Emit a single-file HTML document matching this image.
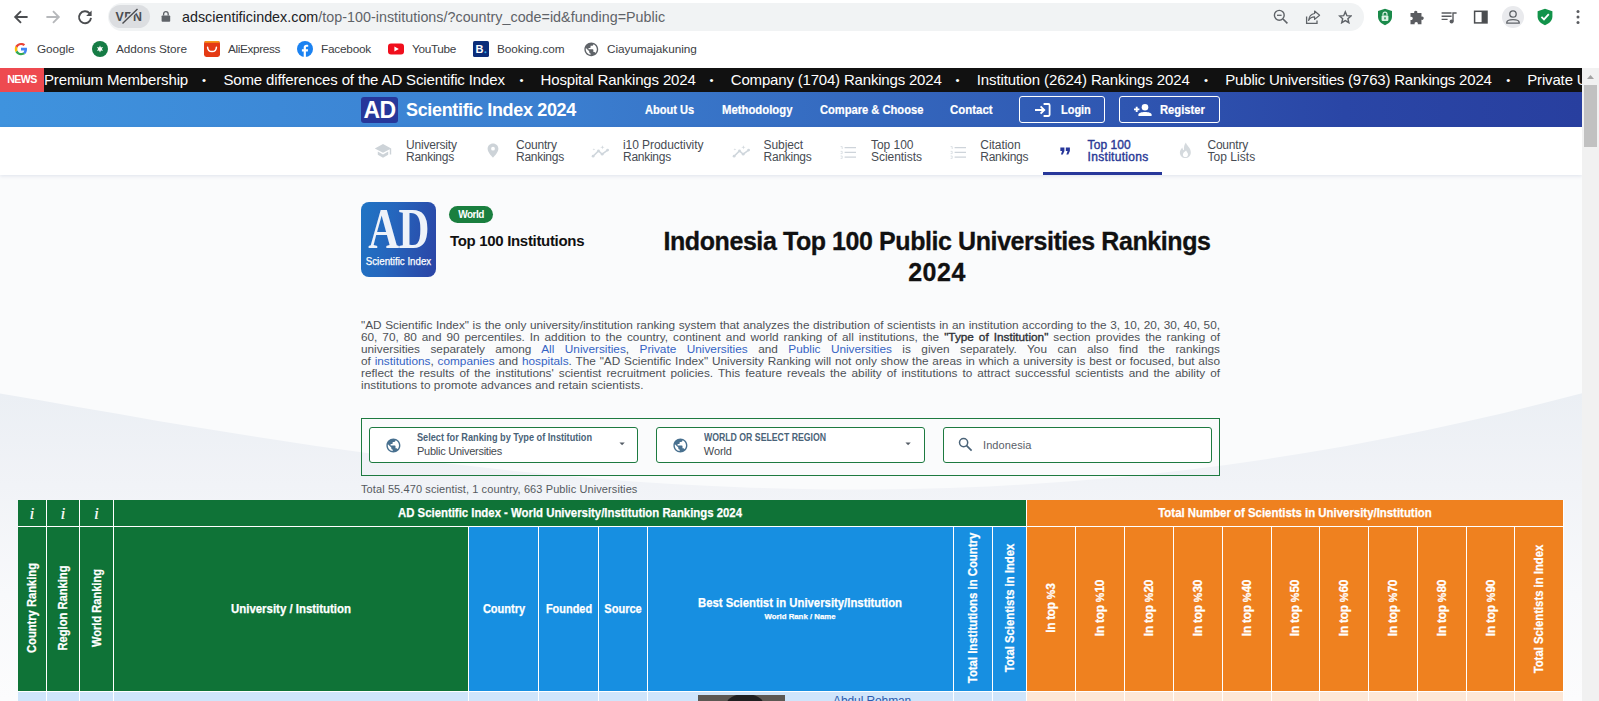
<!DOCTYPE html>
<html lang="en">
<head>
<meta charset="utf-8">
<title>Indonesia Top 100 Public Universities Rankings 2024</title>
<style>
*{box-sizing:border-box;margin:0;padding:0}
html,body{width:1599px;height:701px;overflow:hidden;background:#fff}
body{font-family:"Liberation Sans",sans-serif;color:#222;position:relative}
.abs{position:absolute}
#root{position:absolute;left:0;top:0;width:1599px;height:701px;overflow:hidden;background:#fff}
/* ---------- browser chrome ---------- */
#chrome{position:absolute;left:0;top:0;width:1599px;height:68px;background:#fff}
#omni{position:absolute;left:108px;top:3px;width:1256px;height:28px;border-radius:14px;background:#f1f3f4}
#vpn{position:absolute;left:109px;top:5px;width:41px;height:23px;border-radius:12px;background:#dcdee1}
#url{position:absolute;left:182px;top:8px;font-size:14.3px;line-height:18px;color:#202124;white-space:nowrap;letter-spacing:0.02px}
#url span{color:#5f6368}
.bm{position:absolute;top:41px;font-size:11.8px;line-height:16px;color:#3c4043;white-space:nowrap}
.fav{position:absolute;top:40px;width:16px;height:16px}
/* ---------- page ---------- */
#page{position:absolute;left:0;top:68px;width:1582px;height:633px;background:#fafbfc;overflow:hidden}
#ticker{position:absolute;left:0;top:0;width:1582px;height:24px;background:#111;color:#fff;white-space:nowrap;overflow:hidden}
#news{position:absolute;left:0;top:0;width:44px;height:24px;background:#ee4a50;color:#fff;font-weight:bold;font-size:10.6px;line-height:22px;text-align:center;letter-spacing:-0.55px}
.tk{position:absolute;top:3px;font-size:15px;line-height:18px;color:#fff;white-space:nowrap;letter-spacing:-0.45px}
#hdr{position:absolute;left:0;top:24px;width:1582px;height:35px;background:linear-gradient(90deg,#3f93de 0%,#3b7fd0 35%,#3260b8 62%,#2a46a6 85%,#283f9f 100%)}
#nav{position:absolute;left:0;top:59px;width:1582px;height:48px;background:#fff;box-shadow:0 1px 4px rgba(40,60,120,.13)}
.hl{position:absolute;top:11px;-webkit-text-stroke:0.2px #fff;font-size:12px;font-weight:bold;color:#fff;line-height:14px;white-space:nowrap}
.ni{position:absolute;top:12.5px;font-size:12px;line-height:12px;color:#474c53;white-space:nowrap}
.nic{position:absolute}
#nav > *{margin-top:-1px}
#nav > svg.nic{margin-top:0}

/* hero */
#logo{position:absolute;left:361px;top:134px;width:75px;height:75px;border-radius:8px;background:linear-gradient(100deg,#1f74c4 0%,#2566bd 40%,#2b44a5 100%);overflow:hidden}
#badge{position:absolute;left:449px;top:138px;width:44px;height:17px;border-radius:9px;background:#1a7f3f;color:#fff;font-weight:bold;font-size:10px;line-height:17px;text-align:center;letter-spacing:-0.55px}
#sub{position:absolute;left:450px;top:163px;font-size:15px;line-height:20px;font-weight:bold;color:#111;white-space:nowrap;letter-spacing:-0.32px}
#h1{position:absolute;left:637px;top:158px;-webkit-text-stroke:0.3px #111;width:600px;text-align:center;font-size:25px;line-height:31px;font-weight:bold;color:#111;white-space:nowrap;letter-spacing:-0.42px}
.dl{position:absolute;left:361px;width:859px;font-size:11.8px;line-height:12px;color:#4d5156;text-align:justify;text-align-last:justify;white-space:nowrap;height:12px}
.dl a{color:#3563c4;text-decoration:none}
.dl b{font-weight:normal;color:#2e3136;-webkit-text-stroke:0.35px #2e3136}
/* filter */
#fbox{position:absolute;left:361px;top:350px;width:859px;height:58px;border:1px solid #1d7a40}
.sel{position:absolute;top:359px;height:36px;border:1px solid #1d7a40;border-radius:3px;background:#fff}
.slab{position:absolute;top:362.5px;font-size:9.8px;line-height:12px;font-weight:bold;color:#4a6378;white-space:nowrap}
.sval{position:absolute;top:376.5px;font-size:11px;line-height:13px;color:#454a50;white-space:nowrap}
/* table */
.c{position:absolute;color:#fff;font-weight:bold;font-size:12px;white-space:nowrap}
.g{background:#0f7337}.bl{background:#178fe1}.o{background:#ef811f}
.vt{position:absolute;-webkit-text-stroke:0.25px #fff;color:#fff;font-weight:bold;font-size:12px;line-height:14px;white-space:nowrap;transform:translate(-50%,-50%) rotate(-90deg);transform-origin:center}
.ht{position:absolute;-webkit-text-stroke:0.25px #fff;color:#fff;font-weight:bold;font-size:12px;line-height:14px;white-space:nowrap;transform:translate(-50%,-50%)}
</style>
</head>
<body>
<div id="root">

<!-- ================= BROWSER CHROME ================= -->
<div id="chrome">
  <div id="omni"></div>
  <div id="vpn"></div>
  <div id="url">adscientificindex.com<span>/top-100-institutions/?country_code=id&amp;funding=Public</span></div>

  <!-- nav buttons -->
  <svg class="abs" style="left:13px;top:9px" width="16" height="16" viewBox="0 0 16 16"><path d="M14.6 8 H2.6 M8 2.2 L2.2 8 L8 13.8" fill="none" stroke="#4b4d50" stroke-width="1.9" stroke-linejoin="miter"/></svg>
  <svg class="abs" style="left:45px;top:9px" width="16" height="16" viewBox="0 0 16 16"><path d="M1.4 8 H13.4 M8 2.2 L13.8 8 L8 13.8" fill="none" stroke="#b6b8bb" stroke-width="1.9" stroke-linejoin="miter"/></svg>
  <svg class="abs" style="left:77px;top:9px" width="16" height="16" viewBox="0 0 16 16"><path d="M12.6 4.4 A6 6 0 1 0 14 8.9" fill="none" stroke="#4b4d50" stroke-width="1.9"/><path d="M14.6 1.6 V7 H9.2 Z" fill="#4b4d50"/></svg>
  <!-- vpn chip text -->
  <div class="abs" style="left:114px;top:10px;width:30px;font-size:12.4px;line-height:15px;font-weight:bold;color:#4b4d50;letter-spacing:0.5px;text-align:center">VPN</div>
  <svg class="abs" style="left:109px;top:5px" width="41" height="23" viewBox="0 0 41 23"><path d="M13.5 18.5 L28.5 4" stroke="#dcdee1" stroke-width="4"/><path d="M13.5 18.5 L28.5 4" stroke="#4b4d50" stroke-width="1.4"/></svg>
  <!-- lock -->
  <svg class="abs" style="left:160px;top:10px" width="12" height="13" viewBox="0 0 12 13"><rect x="1.6" y="5.4" width="8.6" height="6.4" rx="0.8" fill="#5f6368"/><path d="M3.6 5.6 V3.9 A2.3 2.3 0 0 1 8.2 3.9 V5.6" fill="none" stroke="#5f6368" stroke-width="1.3"/></svg>
  <!-- zoom out -->
  <svg class="abs" style="left:1272px;top:8px" width="18" height="18" viewBox="0 0 18 18"><circle cx="7.3" cy="7.3" r="4.9" fill="none" stroke="#5f6368" stroke-width="1.4"/><path d="M11 11 L15.4 15.4" stroke="#5f6368" stroke-width="1.6"/><path d="M5 7.3 H9.6" stroke="#5f6368" stroke-width="1.3"/></svg>
  <!-- share -->
  <svg class="abs" style="left:1304px;top:8px" width="18" height="18" viewBox="0 0 18 18"><path d="M2.6 8.4 V15.4 H13 V12.6" fill="none" stroke="#5f6368" stroke-width="1.3"/><path d="M10.6 3 L15.6 7.2 L10.6 11.4 V8.9 C7.6 8.9 5.8 10 4.6 12.4 C5 8.6 7 6 10.6 5.5 Z" fill="none" stroke="#5f6368" stroke-width="1.2" stroke-linejoin="round"/></svg>
  <!-- star -->
  <svg class="abs" style="left:1337.6px;top:9.8px" width="14.6" height="14.6" viewBox="0 0 18 18"><path d="M9 2.3 L11 7 L16 7.4 L12.2 10.7 L13.4 15.7 L9 13 L4.6 15.7 L5.8 10.7 L2 7.4 L7 7 Z" fill="none" stroke="#5f6368" stroke-width="1.75" stroke-linejoin="miter"/></svg>
  <!-- shield lock green -->
  <svg class="abs" style="left:1376px;top:8px" width="18" height="18" viewBox="0 0 18 18"><path d="M9 0.8 L16 3 V8.6 C16 13 12.6 15.8 9 17.2 C5.4 15.8 2 13 2 8.6 V3 Z" fill="#1a8a4a"/><rect x="5.6" y="7.6" width="6.8" height="5.4" rx="1" fill="#d9f2e2"/><path d="M7 7.6 V6.2 A2 2 0 0 1 11 6.2 V7.6" fill="none" stroke="#d9f2e2" stroke-width="1.2"/><rect x="8.3" y="9.3" width="1.4" height="2" fill="#1a8a4a"/></svg>
  <!-- puzzle -->
  <svg class="abs" style="left:1406.6px;top:5.6px" width="21" height="21" viewBox="0 0 18 18"><path d="M3 6 H6.2 C5.4 3.4 9.6 3.4 8.8 6 H12.4 V9.2 C15 8.4 15 12.6 12.4 11.8 V15.6 H9.2 C10 13 5.8 13 6.6 15.6 H3 V12 C5.6 12.8 5.6 8.6 3 9.4 Z" fill="#5a5c60"/></svg>
  <!-- music list -->
  <svg class="abs" style="left:1440px;top:8px" width="18" height="18" viewBox="0 0 18 18"><path d="M1.6 5 H11.6 M1.6 8.2 H11.6 M1.6 11.4 H7.6" stroke="#5a5c60" stroke-width="1.4"/><path d="M13 13.4 V5 H16.6" fill="none" stroke="#5a5c60" stroke-width="1.4"/><circle cx="11.6" cy="13.6" r="2" fill="#5a5c60"/></svg>
  <!-- side panel -->
  <svg class="abs" style="left:1472px;top:8px" width="18" height="18" viewBox="0 0 18 18"><rect x="2.6" y="3.3" width="12.4" height="11.6" fill="none" stroke="#4b4d50" stroke-width="1.5"/><rect x="9.6" y="3.3" width="5.4" height="11.6" fill="#4b4d50"/></svg>
  <!-- profile -->
  <div class="abs" style="left:1502px;top:6px;width:22px;height:22px;border-radius:11px;background:#e9eaed"></div>
  <svg class="abs" style="left:1504px;top:8px" width="18" height="18" viewBox="0 0 18 18"><circle cx="9" cy="6" r="3.2" fill="none" stroke="#5f6368" stroke-width="1.3"/><path d="M2.8 14.6 C2.8 10.6 15.2 10.6 15.2 14.6 V15.2 H2.8 Z" fill="none" stroke="#5f6368" stroke-width="1.3"/></svg>
  <!-- green shield check -->
  <svg class="abs" style="left:1536px;top:8px" width="18" height="18" viewBox="0 0 18 18"><path d="M9 0.8 L16.4 3.2 V8.6 C16.4 13 12.8 15.8 9 17.2 C5.2 15.8 1.6 13 1.6 8.6 V3.2 Z" fill="#12934a"/><path d="M5.4 8.8 L8 11.4 L12.8 6.2" fill="none" stroke="#fff" stroke-width="1.8"/></svg>
  <!-- dots -->
  <svg class="abs" style="left:1569px;top:8px" width="18" height="18" viewBox="0 0 18 18"><circle cx="9" cy="3.4" r="1.5" fill="#5a5c60"/><circle cx="9" cy="9" r="1.5" fill="#5a5c60"/><circle cx="9" cy="14.6" r="1.5" fill="#5a5c60"/></svg>

  <!-- bookmarks -->
  <svg class="fav" style="left:13px;top:41px" viewBox="0 0 16 16"><path d="M14 8.2 C14 7.7 13.95 7.2 13.85 6.8 H8 V9.4 H11.4 C11.2 10.3 10.7 11 10 11.5 L12.1 13.1 C13.3 12 14 10.3 14 8.2 Z" fill="#4285f4"/><path d="M8 14.2 C9.7 14.2 11.1 13.7 12.1 13.1 L10 11.5 C9.5 11.85 8.8 12.1 8 12.1 C6.4 12.1 5 11 4.5 9.5 L2.4 11.1 C3.4 13 5.5 14.2 8 14.2 Z" fill="#34a853"/><path d="M4.5 9.5 C4.4 9.1 4.3 8.6 4.3 8.1 C4.3 7.6 4.4 7.1 4.5 6.7 L2.4 5.1 C2 5.9 1.8 6.9 1.8 8.1 C1.8 9.2 2 10.2 2.4 11.1 Z" fill="#fbbc05"/><path d="M8 4.1 C9 4.1 9.8 4.45 10.5 5.05 L12.2 3.35 C11.1 2.35 9.7 1.9 8 1.9 C5.5 1.9 3.4 3.2 2.4 5.1 L4.5 6.7 C5 5.2 6.4 4.1 8 4.1 Z" fill="#ea4335"/></svg>
  <div class="bm" style="left:37px;letter-spacing:-0.09px">Google</div>
  <svg class="fav" style="left:92px;top:41px" viewBox="0 0 16 16"><circle cx="8" cy="8" r="8" fill="#167c45"/><path d="M8 4.4 L8.9 6.4 L11.1 6.1 L9.8 7.9 L11.1 9.8 L8.9 9.5 L8 11.6 L7.1 9.5 L4.9 9.8 L6.2 7.9 L4.9 6.1 L7.1 6.4 Z" fill="#fff"/></svg>
  <div class="bm" style="left:116px;letter-spacing:-0.04px">Addons Store</div>
  <svg class="fav" style="left:204px;top:41px" viewBox="0 0 16 16"><rect x="0" y="0" width="16" height="16" rx="2.4" fill="#e43a14"/><rect x="0.6" y="0" width="14.8" height="1.8" rx="0.9" fill="#f7971d"/><path d="M3.6 6.2 C3.8 12 12.2 12 12.4 6.2" fill="none" stroke="#fff" stroke-width="1.5" stroke-linecap="round"/></svg>
  <div class="bm" style="left:228px;letter-spacing:-0.37px">AliExpress</div>
  <svg class="fav" style="left:297px;top:41px" viewBox="0 0 16 16"><circle cx="8" cy="8" r="8" fill="#1b82f1"/><path d="M8.9 16 V10.4 H10.8 L11.1 8.2 H8.9 V6.9 C8.9 6.2 9.2 5.8 10 5.8 H11.2 V3.9 C10.9 3.85 10.2 3.8 9.5 3.8 C7.8 3.8 6.7 4.8 6.7 6.6 V8.2 H4.9 V10.4 H6.7 V16 Z" fill="#fff"/></svg>
  <div class="bm" style="left:321px;letter-spacing:-0.23px">Facebook</div>
  <svg class="fav" style="left:388px;top:41px" viewBox="0 0 16 16"><rect x="0" y="2.4" width="16" height="11.2" rx="3" fill="#f00e1c"/><path d="M6.4 5.4 L10.8 8 L6.4 10.6 Z" fill="#fff"/></svg>
  <div class="bm" style="left:412px;letter-spacing:-0.34px">YouTube</div>
  <svg class="fav" style="left:473px;top:41px" viewBox="0 0 16 16"><rect x="0" y="0" width="16" height="16" rx="1.6" fill="#0b2d7a"/><text x="2.6" y="12" font-family="Liberation Sans, sans-serif" font-weight="bold" font-size="11" fill="#fff">B</text><circle cx="12.4" cy="11.2" r="1.05" fill="#32a7e8"/></svg>
  <div class="bm" style="left:497px;letter-spacing:-0.05px">Booking.com</div>
  <svg class="fav" style="left:582.6px;top:40.8px;width:16.6px;height:16.6px" viewBox="0 0 24 24"><path d="M12 2C6.48 2 2 6.48 2 12s4.48 10 10 10 10-4.48 10-10S17.52 2 12 2zm-1 17.93c-3.95-.49-7-3.85-7-7.93 0-.62.08-1.21.21-1.79L9 15v1c0 1.1.9 2 2 2v1.93zm6.9-2.54c-.26-.81-1-1.39-1.9-1.39h-1v-3c0-.55-.45-1-1-1H8v-2h2c.55 0 1-.45 1-1V7h2c1.1 0 2-.9 2-2v-.41c2.93 1.19 5 4.06 5 7.41 0 2.08-.8 3.97-2.1 5.39z" fill="#5f6368"/></svg>
  <div class="bm" style="left:607px;letter-spacing:-0.05px">Ciayumajakuning</div>
</div>

<!-- ================= PAGE ================= -->
<div id="page">
  <svg class="abs" style="left:0;top:0" width="1582" height="633" viewBox="0 0 1582 633"><defs><linearGradient id="wv" x1="0" y1="0" x2="0" y2="1"><stop offset="0" stop-color="#ebeff4"/><stop offset="0.3" stop-color="#f1f3f7"/><stop offset="0.65" stop-color="#f8f9fb"/><stop offset="1" stop-color="#fcfcfd"/></linearGradient></defs><path d="M0 325.4 L40 332.3 L79 339.3 L119 346.1 L158 352.9 L198 359.4 L237 365.8 L277 372.0 L316 377.9 L356 383.6 L396 388.9 L435 394.0 L475 398.6 L514 402.9 L554 406.8 L593 410.3 L633 413.4 L672 416.0 L712 418.1 L751 419.7 L791 420.8 L831 421.4 L870 421.5 L910 421.0 L949 420.0 L989 418.4 L1028 416.3 L1068 413.6 L1107 410.3 L1147 406.4 L1186 401.9 L1226 396.9 L1266 391.2 L1305 385.0 L1345 378.2 L1384 370.8 L1424 362.8 L1463 354.3 L1503 345.2 L1542 335.5 L1582 325.3 V633 H0 Z" fill="url(#wv)"/></svg>
  <div id="ticker">
    <div class="tk" style="left:44px;letter-spacing:-0.15px">Premium Membership</div>
    <div class="tk" style="left:199.0px;width:10px;text-align:center;font-size:11.5px;letter-spacing:0">•</div>
    <div class="tk" style="left:223.4px;letter-spacing:-0.14px">Some differences of the AD Scientific Index</div>
    <div class="tk" style="left:516.4px;width:10px;text-align:center;font-size:11.5px;letter-spacing:0">•</div>
    <div class="tk" style="left:540.5px;letter-spacing:-0.147px">Hospital Rankings 2024</div>
    <div class="tk" style="left:706.6px;width:10px;text-align:center;font-size:11.5px;letter-spacing:0">•</div>
    <div class="tk" style="left:730.8px;letter-spacing:-0.185px">Company (1704) Rankings 2024</div>
    <div class="tk" style="left:952.5px;width:10px;text-align:center;font-size:11.5px;letter-spacing:0">•</div>
    <div class="tk" style="left:976.7px;letter-spacing:-0.09px">Institution (2624) Rankings 2024</div>
    <div class="tk" style="left:1201.0px;width:10px;text-align:center;font-size:11.5px;letter-spacing:0">•</div>
    <div class="tk" style="left:1225.3px;letter-spacing:-0.198px">Public Universities (9763) Rankings 2024</div>
    <div class="tk" style="left:1503.3px;width:10px;text-align:center;font-size:11.5px;letter-spacing:0">•</div>
    <div class="tk" style="left:1527.2px;letter-spacing:-0.15px">Private Universities (5417) Rankings 2024</div>
    <div id="news">NEWS</div>
  </div>
  <div id="hdr">
    <div class="abs" style="left:361px;top:4.5px;width:37px;height:26px;border-radius:3px;background:#27379a"></div>
    <div class="abs" style="left:361px;top:5px;width:37px;height:26px;line-height:26px;text-align:center;font-size:23px;font-weight:bold;color:#fff;letter-spacing:-0.6px">AD</div>
    <div class="abs" style="left:406px;top:7px;font-size:18px;line-height:22px;font-weight:bold;color:#fff;white-space:nowrap;letter-spacing:-0.34px">Scientific Index 2024</div>
    <div class="hl" style="left:645.4px;transform:scaleX(0.9205);transform-origin:0 50%">About Us</div>
    <div class="hl" style="left:722px;transform:scaleX(0.9440);transform-origin:0 50%">Methodology</div>
    <div class="hl" style="left:819.7px;transform:scaleX(0.9282);transform-origin:0 50%">Compare &amp; Choose</div>
    <div class="hl" style="left:950px;transform:scaleX(0.9530);transform-origin:0 50%">Contact</div>
    <div class="abs" style="left:1019px;top:4px;width:86px;height:27px;border:1px solid #fff;border-radius:3px"></div>
    <svg class="abs" style="left:1034px;top:10px" width="18" height="16" viewBox="0 0 18 16"><path d="M1 8 H10 M6.6 4.4 L10.2 8 L6.6 11.6" fill="none" stroke="#fff" stroke-width="1.9"/><path d="M9.6 2 H14.4 Q15.6 2 15.6 3.2 V12.8 Q15.6 14 14.4 14 H9.6" fill="none" stroke="#fff" stroke-width="1.8"/></svg>
    <div class="hl" style="left:1061px;transform:scaleX(0.9127);transform-origin:0 50%">Login</div>
    <div class="abs" style="left:1118.5px;top:4px;width:101.5px;height:27px;border:1px solid #fff;border-radius:3px"></div>
    <svg class="abs" style="left:1133px;top:9.6px" width="19" height="16" viewBox="0 0 19 16"><path d="M1 7.4 H6.4 M3.7 4.7 V10.1" stroke="#fff" stroke-width="1.9"/><circle cx="12" cy="5.2" r="3.3" fill="#fff"/><path d="M5.4 14 V12.6 C5.4 9.2 18.6 9.2 18.6 12.6 V14 Z" fill="#fff"/></svg>
    <div class="hl" style="left:1160px;transform:scaleX(0.9367);transform-origin:0 50%">Register</div>
  </div>
  <div id="nav">
    <!-- graduation cap -->
    <svg class="nic" style="left:374px;top:16px" width="19" height="16" viewBox="0 0 19 16"><path d="M9 1 L0.8 5.4 L9 9.8 L15.8 6.2 V11.4 H17.2 V5.4 Z" fill="#cdd3d8"/><path d="M3.8 8.6 V11.8 L9 14.8 L14.2 11.8 V8.6 L9 11.4 Z" fill="#cdd3d8"/></svg>
    <div class="ni" style="left:406px"><span style="letter-spacing:-0.2px">University</span><br><span style="letter-spacing:-0.27px">Rankings</span></div>
    <!-- pin -->
    <svg class="nic" style="left:487px;top:16px" width="12" height="15" viewBox="0 0 12 15"><path d="M6 0.4 C2.9 0.4 0.6 2.8 0.6 5.7 C0.6 9.6 6 14.6 6 14.6 C6 14.6 11.4 9.6 11.4 5.7 C11.4 2.8 9.1 0.4 6 0.4 Z M6 3.8 A1.9 1.9 0 1 1 6 7.6 A1.9 1.9 0 1 1 6 3.8 Z" fill="#cdd3d8" fill-rule="evenodd"/></svg>
    <div class="ni" style="left:516px"><span style="letter-spacing:-0.18px">Country</span><br><span style="letter-spacing:-0.27px">Rankings</span></div>
    <!-- trend -->
    <svg class="nic" style="left:591px;top:17px" width="19" height="14" viewBox="0 0 19 14"><path d="M2.1 12.2 L7.5 6.9 L11.2 10.2 L16.6 6.1" fill="none" stroke="#cfd6dc" stroke-width="1.5" stroke-linecap="round" stroke-linejoin="round"/><circle cx="2.1" cy="12.2" r="1.4" fill="#cfd6dc"/><circle cx="7.5" cy="6.9" r="1.4" fill="#cfd6dc"/><circle cx="11.2" cy="10.2" r="1.4" fill="#cfd6dc"/><circle cx="16.6" cy="6.1" r="1.4" fill="#cfd6dc"/><path d="M11.4 1.2 L11.9 2.8 L13.6 3.3 L11.9 3.8 L11.4 5.4 L10.9 3.8 L9.2 3.3 L10.9 2.8 Z M2.9 4.2 L3.2 5.1 L4.4 5.4 L3.2 5.7 L2.9 6.6 L2.6 5.7 L1.4 5.4 L2.6 5.1 Z" fill="#d3d9de"/></svg>
    <div class="ni" style="left:623px"><span style="letter-spacing:-0.06px">i10 Productivity</span><br><span style="letter-spacing:-0.27px">Rankings</span></div>
    <svg class="nic" style="left:732px;top:17px" width="19" height="14" viewBox="0 0 19 14"><path d="M2.1 12.2 L7.5 6.9 L11.2 10.2 L16.6 6.1" fill="none" stroke="#cfd6dc" stroke-width="1.5" stroke-linecap="round" stroke-linejoin="round"/><circle cx="2.1" cy="12.2" r="1.4" fill="#cfd6dc"/><circle cx="7.5" cy="6.9" r="1.4" fill="#cfd6dc"/><circle cx="11.2" cy="10.2" r="1.4" fill="#cfd6dc"/><circle cx="16.6" cy="6.1" r="1.4" fill="#cfd6dc"/><path d="M11.4 1.2 L11.9 2.8 L13.6 3.3 L11.9 3.8 L11.4 5.4 L10.9 3.8 L9.2 3.3 L10.9 2.8 Z M2.9 4.2 L3.2 5.1 L4.4 5.4 L3.2 5.7 L2.9 6.6 L2.6 5.7 L1.4 5.4 L2.6 5.1 Z" fill="#d3d9de"/></svg>
    <div class="ni" style="left:763.6px"><span style="letter-spacing:-0.1px">Subject</span><br><span style="letter-spacing:-0.27px">Rankings</span></div>
    <!-- list -->
    <svg class="nic" style="left:840px;top:18.6px" width="17" height="13" viewBox="0 0 17 13"><path d="M4.6 1.6 H16 M4.6 6.4 H16 M4.6 11.2 H16" stroke="#ced4da" stroke-width="1.3"/><path d="M0.6 0.6 H2.2 V3 M0.6 5.4 H2.2 V7.6 H0.6 M0.6 10 H2.2 V12.4 H0.6" fill="none" stroke="#d3d9de" stroke-width="0.8"/></svg>
    <div class="ni" style="left:871px"><span style="letter-spacing:-0.03px">Top 100</span><br><span style="letter-spacing:-0.04px">Scientists</span></div>
    <svg class="nic" style="left:950px;top:18.6px" width="17" height="13" viewBox="0 0 17 13"><path d="M4.6 1.6 H16 M4.6 6.4 H16 M4.6 11.2 H16" stroke="#ced4da" stroke-width="1.3"/><path d="M0.6 0.6 H2.2 V3 M0.6 5.4 H2.2 V7.6 H0.6 M0.6 10 H2.2 V12.4 H0.6" fill="none" stroke="#d3d9de" stroke-width="0.8"/></svg>
    <div class="ni" style="left:980.3px"><span style="letter-spacing:-0.05px">Citation</span><br><span style="letter-spacing:-0.27px">Rankings</span></div>
    <!-- quote -->
    <svg class="nic" style="left:1059.8px;top:19.6px" width="10.6" height="8" viewBox="0 0 12 9"><path d="M0.4 0.4 H5 V4.6 L3.2 8.4 H1 L2.4 4.6 H0.4 Z M6.6 0.4 H11.2 V4.6 L9.4 8.4 H7.2 L8.6 4.6 H6.6 Z" fill="#27379a"/></svg>
    <div class="ni" style="left:1087.6px;color:#2a3a96;-webkit-text-stroke:0.4px #2a3a96"><span style="letter-spacing:0.06px">Top 100</span><br><span style="letter-spacing:0.3px">Institutions</span></div>
    <div class="abs" style="left:1043px;top:46px;width:119px;height:3px;background:#27379a"></div>
    <!-- fire -->
    <svg class="nic" style="left:1177.7px;top:15.4px" width="14.7" height="17" viewBox="0 0 14 18"><path d="M7.6 0.6 C8.4 4 12.8 6.2 12.8 11 C12.8 14.6 10.2 17 7 17 C3.8 17 1.2 14.6 1.2 11.4 C1.2 8.8 2.8 7 3.8 5.8 C4 7.4 4.6 8.4 5.6 8.8 C5.2 5.6 6 2.4 7.6 0.6 Z M7 16 C8.6 16 9.8 14.8 9.8 13.2 C9.8 11.4 8.4 10.6 7.8 9 C6.2 10.4 4.4 11.4 4.4 13.4 C4.4 14.8 5.6 16 7 16 Z" fill="#d5dade" fill-rule="evenodd"/></svg>
    <div class="ni" style="left:1207.4px"><span style="letter-spacing:-0.18px">Country</span><br><span style="letter-spacing:0.06px">Top Lists</span></div>
  </div>

  <!-- hero -->
  <div id="logo">
    <div class="abs" style="left:-12px;top:-2px;width:99px;text-align:center;font-family:'Liberation Serif',serif;font-weight:bold;font-size:56px;line-height:58px;color:#eef2f9;transform:scaleX(0.765);transform-origin:49.5px 0;letter-spacing:-1px">AD</div>
    <div class="abs" style="left:-12px;top:52px;width:99px;text-align:center;font-size:11px;line-height:14px;color:#fff;-webkit-text-stroke:0.25px #fff;transform:scaleX(0.885);transform-origin:49.5px 0;white-space:nowrap">Scientific Index</div>
  </div>
  <div id="badge">World</div>
  <div id="sub">Top 100 Institutions</div>
  <div id="h1">Indonesia Top 100 Public Universities Rankings<br><span style="letter-spacing:0.5px">2024</span></div>

  <!-- description -->
  <div class="dl" style="top:251px">"AD Scientific Index" is the only university/institution ranking system that analyzes the distribution of scientists in an institution according to the 3, 10, 20, 30, 40, 50,</div>
  <div class="dl" style="top:263px">60, 70, 80 and 90 percentiles. In addition to the country, continent and world ranking of all institutions, the <b>"Type of Institution"</b> section provides the ranking of</div>
  <div class="dl" style="top:275px">universities separately among <a>All Universities</a>, <a>Private Universities</a> and <a>Public Universities</a> is given separately. You can also find the rankings</div>
  <div class="dl" style="top:287px">of <a>institutions</a>, <a>companies</a> and <a>hospitals</a>. The "AD Scientific Index" University Ranking will not only show the areas in which a university is best or focused, but also</div>
  <div class="dl" style="top:299px">reflect the results of the institutions' scientist recruitment policies. This feature reveals the ability of institutions to attract successful scientists and the ability of</div>
  <div class="dl" style="top:311px;width:auto;text-align:left;text-align-last:left;letter-spacing:0.045px">institutions to promote advances and retain scientists.</div>

  <!-- filter box -->
  <div id="fbox"></div>
  <div class="sel" style="left:369px;width:269px"></div>
  <svg class="abs" style="left:384.6px;top:368.6px" width="16.8" height="16.8" viewBox="0 0 24 24"><path d="M12 2C6.48 2 2 6.48 2 12s4.48 10 10 10 10-4.48 10-10S17.52 2 12 2zm-1 17.93c-3.95-.49-7-3.85-7-7.93 0-.62.08-1.21.21-1.79L9 15v1c0 1.1.9 2 2 2v1.93zm6.9-2.54c-.26-.81-1-1.39-1.9-1.39h-1v-3c0-.55-.45-1-1-1H8v-2h2c.55 0 1-.45 1-1V7h2c1.1 0 2-.9 2-2v-.41c2.93 1.19 5 4.06 5 7.41 0 2.08-.8 3.97-2.1 5.39z" fill="#48708f"/></svg>
  <div class="slab" style="left:417px;font-size:10.5px;transform:scaleX(0.873);transform-origin:0 50%">Select for Ranking by Type of Institution</div>
  <div class="sval" style="left:417px;letter-spacing:-0.26px">Public Universities</div>
  <svg class="abs" style="left:619px;top:373.6px" width="6.2" height="4" viewBox="0 0 8 5"><path d="M0.6 0.6 H7.4 L4 4.2 Z" fill="#555d66"/></svg>

  <div class="sel" style="left:656px;width:269px"></div>
  <svg class="abs" style="left:671.6px;top:368.6px" width="16.8" height="16.8" viewBox="0 0 24 24"><path d="M12 2C6.48 2 2 6.48 2 12s4.48 10 10 10 10-4.48 10-10S17.52 2 12 2zm-1 17.93c-3.95-.49-7-3.85-7-7.93 0-.62.08-1.21.21-1.79L9 15v1c0 1.1.9 2 2 2v1.93zm6.9-2.54c-.26-.81-1-1.39-1.9-1.39h-1v-3c0-.55-.45-1-1-1H8v-2h2c.55 0 1-.45 1-1V7h2c1.1 0 2-.9 2-2v-.41c2.93 1.19 5 4.06 5 7.41 0 2.08-.8 3.97-2.1 5.39z" fill="#48708f"/></svg>
  <div class="slab" style="left:703.8px;font-size:10.5px;transform:scaleX(0.83);transform-origin:0 50%">WORLD OR SELECT REGION</div>
  <div class="sval" style="left:703.8px;letter-spacing:-0.1px">World</div>
  <svg class="abs" style="left:905px;top:373.6px" width="6.2" height="4" viewBox="0 0 8 5"><path d="M0.6 0.6 H7.4 L4 4.2 Z" fill="#555d66"/></svg>

  <div class="sel" style="left:943px;width:269px"></div>
  <svg class="abs" style="left:958px;top:369px" width="15" height="15" viewBox="0 0 15 15"><circle cx="5.6" cy="5.6" r="4.1" fill="none" stroke="#4a6378" stroke-width="1.5"/><path d="M8.6 8.6 L13.6 13.6" stroke="#4a6378" stroke-width="1.7"/></svg>
  <div class="sval" style="left:983px;top:370.5px;color:#5a6068;letter-spacing:0.09px">Indonesia</div>

  <div class="abs" style="left:361px;top:414.5px;font-size:11px;line-height:13px;color:#555a60;white-space:nowrap;letter-spacing:0.1px">Total 55.470 scientist, 1 country, 663 Public Universities</div>

  <!-- table -->
  <div class="abs" style="left:18px;top:432px;width:1546px;height:201px;background:#fff"></div>
  <!-- row 1 -->
  <div class="c g" style="left:18px;top:432px;width:28px;height:26px"></div>
  <div class="c g" style="left:47px;top:432px;width:32px;height:26px"></div>
  <div class="c g" style="left:80px;top:432px;width:33px;height:26px"></div>
  <div class="c g" style="left:114px;top:432px;width:912px;height:26px"></div>
  <div class="c o" style="left:1027px;top:432px;width:536px;height:26px"></div>
  <!-- row 2 -->
  <div class="c g" style="left:18px;top:459px;width:28px;height:164px"></div>
  <div class="c g" style="left:47px;top:459px;width:32px;height:164px"></div>
  <div class="c g" style="left:80px;top:459px;width:33px;height:164px"></div>
  <div class="c g" style="left:114px;top:459px;width:354px;height:164px"></div>
  <div class="c bl" style="left:469px;top:459px;width:69px;height:164px"></div>
  <div class="c bl" style="left:539px;top:459px;width:59px;height:164px"></div>
  <div class="c bl" style="left:599px;top:459px;width:48px;height:164px"></div>
  <div class="c bl" style="left:648px;top:459px;width:305px;height:164px"></div>
  <div class="c bl" style="left:954px;top:459px;width:38px;height:164px"></div>
  <div class="c bl" style="left:993px;top:459px;width:33px;height:164px"></div>
  <div class="c o" style="left:1027px;top:459px;width:48px;height:164px"></div>
  <div class="c o" style="left:1076px;top:459px;width:48px;height:164px"></div>
  <div class="c o" style="left:1125px;top:459px;width:48px;height:164px"></div>
  <div class="c o" style="left:1174px;top:459px;width:48px;height:164px"></div>
  <div class="c o" style="left:1223px;top:459px;width:48px;height:164px"></div>
  <div class="c o" style="left:1272px;top:459px;width:47px;height:164px"></div>
  <div class="c o" style="left:1320px;top:459px;width:48px;height:164px"></div>
  <div class="c o" style="left:1369px;top:459px;width:48px;height:164px"></div>
  <div class="c o" style="left:1418px;top:459px;width:48px;height:164px"></div>
  <div class="c o" style="left:1467px;top:459px;width:47px;height:164px"></div>
  <div class="c o" style="left:1515px;top:459px;width:48px;height:164px"></div>
  <!-- row 3 (data) -->
  <div class="abs" style="left:18px;top:624px;width:28px;height:9px;background:#cfe5fb"></div>
  <div class="abs" style="left:47px;top:624px;width:32px;height:9px;background:#cfe5fb"></div>
  <div class="abs" style="left:80px;top:624px;width:33px;height:9px;background:#cfe5fb"></div>
  <div class="abs" style="left:114px;top:624px;width:354px;height:9px;background:#cfe5fb"></div>
  <div class="abs" style="left:469px;top:624px;width:69px;height:9px;background:#cfe5fb"></div>
  <div class="abs" style="left:539px;top:624px;width:59px;height:9px;background:#cfe5fb"></div>
  <div class="abs" style="left:599px;top:624px;width:48px;height:9px;background:#cfe5fb"></div>
  <div class="abs" style="left:648px;top:624px;width:305px;height:9px;background:#cfe5fb"></div>
  <div class="abs" style="left:954px;top:624px;width:38px;height:9px;background:#cfe5fb"></div>
  <div class="abs" style="left:993px;top:624px;width:33px;height:9px;background:#cfe5fb"></div>
  <div class="abs" style="left:1027px;top:624px;width:48px;height:9px;background:#fde7d6"></div>
  <div class="abs" style="left:1076px;top:624px;width:48px;height:9px;background:#fde7d6"></div>
  <div class="abs" style="left:1125px;top:624px;width:48px;height:9px;background:#fde7d6"></div>
  <div class="abs" style="left:1174px;top:624px;width:48px;height:9px;background:#fde7d6"></div>
  <div class="abs" style="left:1223px;top:624px;width:48px;height:9px;background:#fde7d6"></div>
  <div class="abs" style="left:1272px;top:624px;width:47px;height:9px;background:#fde7d6"></div>
  <div class="abs" style="left:1320px;top:624px;width:48px;height:9px;background:#fde7d6"></div>
  <div class="abs" style="left:1369px;top:624px;width:48px;height:9px;background:#fde7d6"></div>
  <div class="abs" style="left:1418px;top:624px;width:48px;height:9px;background:#fde7d6"></div>
  <div class="abs" style="left:1467px;top:624px;width:47px;height:9px;background:#fde7d6"></div>
  <div class="abs" style="left:1515px;top:624px;width:48px;height:9px;background:#fde7d6"></div>
  <div class="abs" style="left:698px;top:627px;width:87px;height:6px;background:#5c5853;overflow:hidden"><div class="abs" style="left:29px;top:-1.5px;width:36px;height:18px;border-radius:50%;background:#1f1f20"></div></div>
  <div class="abs" style="left:833px;top:626.4px;font-size:12px;line-height:14px;color:#2c5cae;white-space:nowrap;letter-spacing:-0.1px">Abdul Rohman</div>

  <!-- table header texts -->
  <div class="ht" style="left:32px;top:445px;font-family:'Liberation Serif',serif;font-style:italic;font-weight:normal;-webkit-text-stroke:0.15px #fff;font-size:17.5px">i</div>
  <div class="ht" style="left:63px;top:445px;font-family:'Liberation Serif',serif;font-style:italic;font-weight:normal;-webkit-text-stroke:0.15px #fff;font-size:17.5px">i</div>
  <div class="ht" style="left:96.5px;top:445px;font-family:'Liberation Serif',serif;font-style:italic;font-weight:normal;-webkit-text-stroke:0.15px #fff;font-size:17.5px">i</div>
  <div class="ht" style="left:570px;top:445px;transform:translate(-50%,-50%) scaleX(0.9471)">AD Scientific Index - World University/Institution Rankings 2024</div>
  <div class="ht" style="left:1295.2px;top:445px;transform:translate(-50%,-50%) scaleX(0.9503)">Total Number of Scientists in University/Institution</div>
  <div class="vt" style="left:32px;top:539.5px;transform:translate(-50%,-50%) rotate(-90deg) scaleX(0.9310)">Country Ranking</div>
  <div class="vt" style="left:63px;top:539.5px;transform:translate(-50%,-50%) rotate(-90deg) scaleX(0.9310)">Region Ranking</div>
  <div class="vt" style="left:96.5px;top:539.5px;transform:translate(-50%,-50%) rotate(-90deg) scaleX(0.9230)">World Ranking</div>
  <div class="ht" style="left:291px;top:540.5px;transform:translate(-50%,-50%) scaleX(0.9524)">University / Institution</div>
  <div class="ht" style="left:503.6px;top:540.5px;transform:translate(-50%,-50%) scaleX(0.9178)">Country</div>
  <div class="ht" style="left:568.5px;top:540.5px;transform:translate(-50%,-50%) scaleX(0.9116)">Founded</div>
  <div class="ht" style="left:623.2px;top:540.5px;transform:translate(-50%,-50%) scaleX(0.9218)">Source</div>
  <div class="ht" style="left:800.4px;top:534.5px;transform:translate(-50%,-50%) scaleX(0.9445)">Best Scientist in University/Institution</div>
  <div class="ht" style="left:800.4px;top:549px;font-size:8px;line-height:10px;transform:translate(-50%,-50%) scaleX(0.9766)">World Rank / Name</div>
  <div class="vt" style="left:973px;top:540.3px;transform:translate(-50%,-50%) rotate(-90deg) scaleX(0.9453)">Total Institutions in Country</div>
  <div class="vt" style="left:1010px;top:540.1px;transform:translate(-50%,-50%) rotate(-90deg) scaleX(0.9432)">Total Scientists in Index</div>
  <div class="vt" style="left:1050.6px;top:539.5px;letter-spacing:-0.38px">In top <span style="font-size:10.6px;letter-spacing:0.25px">%</span>3</div>
  <div class="vt" style="left:1099.6px;top:540px;letter-spacing:-0.30px">In top <span style="font-size:10.6px;letter-spacing:0.25px">%</span>10</div>
  <div class="vt" style="left:1148.6px;top:540px;letter-spacing:-0.30px">In top <span style="font-size:10.6px;letter-spacing:0.25px">%</span>20</div>
  <div class="vt" style="left:1197.6px;top:540px;letter-spacing:-0.30px">In top <span style="font-size:10.6px;letter-spacing:0.25px">%</span>30</div>
  <div class="vt" style="left:1246.6px;top:540px;letter-spacing:-0.30px">In top <span style="font-size:10.6px;letter-spacing:0.25px">%</span>40</div>
  <div class="vt" style="left:1295.1px;top:540px;letter-spacing:-0.30px">In top <span style="font-size:10.6px;letter-spacing:0.25px">%</span>50</div>
  <div class="vt" style="left:1344.1px;top:540px;letter-spacing:-0.30px">In top <span style="font-size:10.6px;letter-spacing:0.25px">%</span>60</div>
  <div class="vt" style="left:1393.1px;top:540px;letter-spacing:-0.30px">In top <span style="font-size:10.6px;letter-spacing:0.25px">%</span>70</div>
  <div class="vt" style="left:1442.1px;top:540px;letter-spacing:-0.30px">In top <span style="font-size:10.6px;letter-spacing:0.25px">%</span>80</div>
  <div class="vt" style="left:1490.6px;top:540px;letter-spacing:-0.30px">In top <span style="font-size:10.6px;letter-spacing:0.25px">%</span>90</div>
  <div class="vt" style="left:1538.6px;top:540.5px;transform:translate(-50%,-50%) rotate(-90deg) scaleX(0.9432)">Total Scientists in Index</div>
</div>

<!-- scrollbar -->
<div class="abs" style="left:1582px;top:68px;width:17px;height:633px;background:#f1f1f1"></div>
<div class="abs" style="left:1584px;top:85px;width:13px;height:62px;background:#c1c1c1"></div>
<svg class="abs" style="left:1582px;top:68px" width="17" height="17" viewBox="0 0 17 17"><path d="M5 11 L8.5 7 L12 11 Z" fill="#a3a3a3"/></svg>

</div>
</body>
</html>
